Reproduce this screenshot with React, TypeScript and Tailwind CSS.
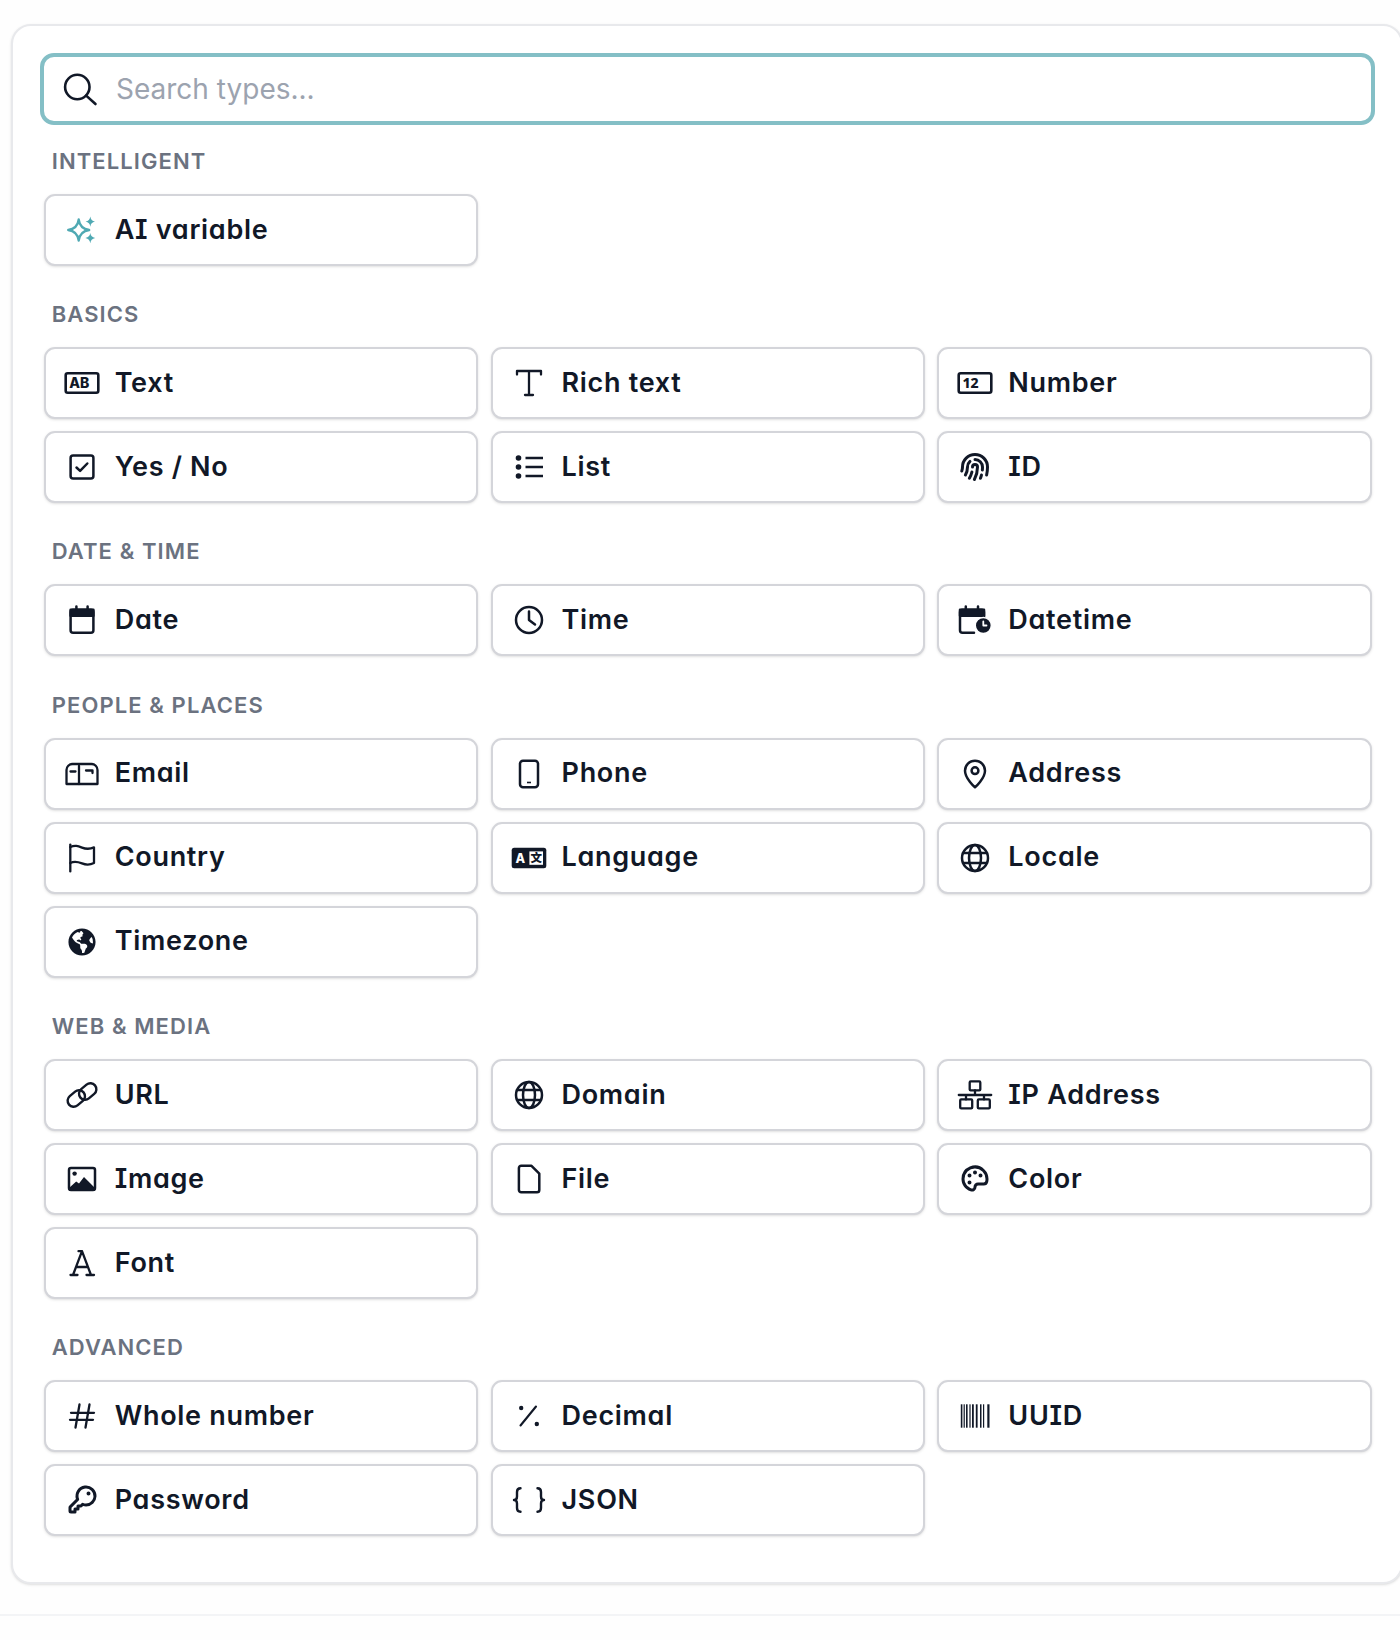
import React from "react";
import { PiFingerprintBold, PiPaletteBold, PiKeyBold } from "react-icons/pi";
import { FaGlobeAmericas } from "react-icons/fa";

const S = ({ children, c = "#111827", w = 2.5 }: { children: React.ReactNode; c?: string; w?: number }) => (
  <svg width="36" height="36" viewBox="0 0 36 36" fill="none" stroke={c} strokeWidth={w} strokeLinecap="round" strokeLinejoin="round">
    {children}
  </svg>
);
const D = "#111827";
const Globe = () => (
  <S>
    <circle cx="18" cy="18" r="13" />
    <ellipse cx="18" cy="18" rx="6" ry="13" />
    <path d="M6 13h24M6 23h24" />
  </S>
);
const Wrap = ({ children }: { children: React.ReactNode }) => (
  <span className="flex h-9 w-9 items-center justify-center text-[#111827]">{children}</span>
);

const icons: Record<string, React.ReactNode> = {
  ai: (
    <S c="#4fa9b3" w={2.3}>
      <path d="M14.7 7.5C15.5 14 18.5 17 25.2 18C18.5 19 15.5 22 14.7 28.5C13.9 22 10.9 19 4.2 18C10.9 17 13.9 14 14.7 7.5Z" />
      <path fill="#4fa9b3" stroke="none" d="M26.3 4.5C26.8 7.6 28.1 8.9 31 9.6C28.1 10.3 26.8 11.6 26.3 14.7C25.8 11.6 24.5 10.3 21.6 9.6C24.5 8.9 25.8 7.6 26.3 4.5Z" />
      <path fill="#4fa9b3" stroke="none" d="M26.3 21C26.8 24 28.1 25.3 31.2 26C28.1 26.7 26.8 28 26.3 31.2C25.8 28 24.5 26.7 21.4 26C24.5 25.3 25.8 24 26.3 21Z" />
    </S>
  ),
  text: (
    <S w={2.6}>
      <rect x="1.7" y="8.2" width="32.6" height="19.6" rx="2" />
      <text x="15.2" y="23" textAnchor="middle" fontSize="14" fontWeight="800" fill={D} stroke="none" fontFamily="Inter, sans-serif">AB</text>
    </S>
  ),
  rich: (
    <S w={2.3}>
      <path d="M6 9.5V6h24v3.5M18 6v24M14 30h8" />
    </S>
  ),
  number: (
    <S w={2.6}>
      <rect x="1.7" y="8.2" width="32.6" height="19.6" rx="2" />
      <text x="13.5" y="23" textAnchor="middle" fontSize="14" fontWeight="800" fill={D} stroke="none" fontFamily="'Noto Sans', sans-serif">12</text>
    </S>
  ),
  yes: (
    <S>
      <rect x="6.6" y="6.6" width="22.8" height="22.8" rx="2.5" />
      <path d="M12.5 18.5l3.6 3.4 7.2-7.4" />
    </S>
  ),
  list: (
    <S>
      <circle cx="7.5" cy="9" r="2.8" fill={D} stroke="none" />
      <circle cx="7.5" cy="18" r="2.8" fill={D} stroke="none" />
      <circle cx="7.5" cy="27" r="2.8" fill={D} stroke="none" />
      <path d="M14.5 9H32M14.5 18H32M14.5 27H32" strokeLinecap="butt" />
    </S>
  ),
  id: <Wrap><PiFingerprintBold size={32} /></Wrap>,
  date: (
    <S>
      <rect x="6.6" y="7.8" width="22.8" height="23" rx="2.5" />
      <rect x="6.6" y="7.8" width="22.8" height="6" fill={D} />
      <path d="M12.4 4.5v3M23.6 4.5v3" />
    </S>
  ),
  time: (
    <S>
      <circle cx="18" cy="18" r="13" />
      <path d="M18 9.5V18l6 4.5" />
    </S>
  ),
  datetime: (
    <S>
      <path d="M27 20V10.3a2.5 2.5 0 0 0-2.5-2.5h-19A2.5 2.5 0 0 0 3 10.3v18a2.5 2.5 0 0 0 2.5 2.5H17" />
      <rect x="3" y="7.8" width="24" height="6" fill={D} />
      <path d="M8.8 4.5v3M21 4.5v3" />
      <circle cx="26.3" cy="23.5" r="8" fill={D} stroke="#fff" strokeWidth="1.4" />
      <path d="M26.3 19.5v4h3.2" stroke="#fff" strokeWidth="1.8" />
    </S>
  ),
  email: (
    <S w={2.3}>
      <path d="M8.5 8H27.5A6 6 0 0 1 33.5 14V28H2.5V14A6 6 0 0 1 8.5 8Z" />
      <path d="M15 10V28M6.5 15.5h5M22 14.5h6.5v2.5" />
    </S>
  ),
  phone: (
    <S>
      <rect x="9" y="4.7" width="18" height="26.6" rx="3" />
      <path d="M16 26.5h4" strokeWidth="1.6" strokeLinecap="butt" />
    </S>
  ),
  address: (
    <S>
      <path d="M18 31.3C18 31.3 8 22.5 8 14.7A10 10 0 0 1 28 14.7C28 22.5 18 31.3 18 31.3Z" />
      <circle cx="18" cy="14.7" r="3.4" />
    </S>
  ),
  country: (
    <S w={2.3}>
      <path d="M6.3 4.6V31.4" />
      <path d="M6.3 7C11 4.8 14 6 18 7.6C22 9.2 26 9.2 30 7.4V23C26 25 22 25 18 23.4C14 21.8 10.5 20.8 6.3 23" />
    </S>
  ),
  language: (
    <svg width="36" height="36" viewBox="0 0 36 36">
      <rect x="0.7" y="7.8" width="34.6" height="20.4" rx="2.5" fill={D} />
      <rect x="18.4" y="11.4" width="13.6" height="13.4" fill="#fff" />
      <text x="9.4" y="22.6" textAnchor="middle" fontSize="12.5" fontWeight="800" fill="#fff" fontFamily="Inter, sans-serif">A</text>
      <text x="25.2" y="22.4" textAnchor="middle" fontSize="11.5" fontWeight="900" fill={D} fontFamily="'Noto Sans CJK SC', sans-serif">文</text>
    </svg>
  ),
  locale: <Globe />,
  timezone: <Wrap><FaGlobeAmericas size={28} /></Wrap>,
  url: (
    <S w={2.4}>
      <rect x="2.8" y="15.5" width="19" height="12" rx="6" transform="rotate(-40 12.3 21.5)" />
      <rect x="14.2" y="8.5" width="19" height="12" rx="6" transform="rotate(-40 23.7 14.5)" />
    </S>
  ),
  domain: <Globe />,
  ip: (
    <S w={2.3}>
      <rect x="12.7" y="4.4" width="10.6" height="9" rx="1" />
      <path d="M18 13.4V18M1.8 18h32.4M9 18v4.4M27 18v4.4" />
      <rect x="3.2" y="22.4" width="12" height="9" rx="1" />
      <rect x="20.8" y="22.4" width="12" height="9" rx="1" />
    </S>
  ),
  image: (
    <S>
      <rect x="5" y="7" width="26" height="22" rx="2" />
      <circle cx="10.6" cy="12.6" r="2.2" fill={D} stroke="none" />
      <path fill={D} stroke="none" d="M5 27l7.2-6.6 2.8 2.2 5-6.6 11 11V30H5z" />
    </S>
  ),
  file: (
    <S>
      <path d="M10.2 4.8H20.5L28.3 12.6V29A2.3 2.3 0 0 1 26 31.3H10.2A2.3 2.3 0 0 1 7.9 29V7.1A2.3 2.3 0 0 1 10.2 4.8Z" />
    </S>
  ),
  color: <Wrap><PiPaletteBold size={32} /></Wrap>,
  font: (
    <S w={2.3}>
      <path d="M6.5 30h7M22.5 30H30M9 30L18 6.2 27 30M12.2 22H23.8M14.5 6.2H18" />
    </S>
  ),
  whole: (
    <S w={2.3}>
      <path d="M15.5 6.5L11.5 29.5M25.5 6.5L21.5 29.5M7 14.8H30M6 21.8H29" />
    </S>
  ),
  decimal: (
    <S w={2.1}>
      <path d="M25 8.5L9.5 27.5" />
      <circle cx="10.2" cy="10" r="2.2" fill={D} stroke="none" />
      <circle cx="25.8" cy="26" r="2.2" fill={D} stroke="none" />
    </S>
  ),
  uuid: (
    <svg width="36" height="36" viewBox="0 0 36 36" fill={D}>
      <rect x="3.8" y="6.3" width="1.6" height="23.4" />
      <rect x="6.6" y="6.3" width="1.2" height="23.4" />
      <rect x="9" y="6.3" width="1.6" height="23.4" />
      <rect x="12.4" y="6.3" width="1.2" height="23.4" />
      <rect x="15" y="6.3" width="1.8" height="23.4" />
      <rect x="18.8" y="6.3" width="1.8" height="23.4" />
      <rect x="23" y="6.3" width="1.5" height="23.4" />
      <rect x="26" y="6.3" width="1.2" height="23.4" />
      <rect x="30.3" y="6.3" width="2.2" height="23.4" />
    </svg>
  ),
  password: <Wrap><PiKeyBold size={32} /></Wrap>,
  json: (
    <S w={2.4}>
      <path d="M9.5 6.3C6.5 6.3 6 8 6 10V14.5C6 16.5 5 18 3 18C5 18 6 19.5 6 21.5V26C6 28 6.5 29.7 9.5 29.7" />
      <path d="M26.5 6.3C29.5 6.3 30 8 30 10V14.5C30 16.5 31 18 33 18C31 18 30 19.5 30 21.5V26C30 28 29.5 29.7 26.5 29.7" />
    </S>
  ),
};

type Item = [string, string];
const sections: { title: string; items: Item[] }[] = [
  { title: "INTELLIGENT", items: [["ai", "AI variable"]] },
  { title: "BASICS", items: [["text", "Text"], ["rich", "Rich text"], ["number", "Number"], ["yes", "Yes / No"], ["list", "List"], ["id", "ID"]] },
  { title: "DATE & TIME", items: [["date", "Date"], ["time", "Time"], ["datetime", "Datetime"]] },
  { title: "PEOPLE & PLACES", items: [["email", "Email"], ["phone", "Phone"], ["address", "Address"], ["country", "Country"], ["language", "Language"], ["locale", "Locale"], ["timezone", "Timezone"]] },
  { title: "WEB & MEDIA", items: [["url", "URL"], ["domain", "Domain"], ["ip", "IP Address"], ["image", "Image"], ["file", "File"], ["color", "Color"], ["font", "Font"]] },
  { title: "ADVANCED", items: [["whole", "Whole number"], ["decimal", "Decimal"], ["uuid", "UUID"], ["password", "Password"], ["json", "JSON"]] },
];

export default function App() {
  return (
    <div className="h-[1640px] w-[1400px] overflow-hidden bg-[#fefefe] font-['Inter',sans-serif]">
      <div className="h-[1616px] border-b-2 border-[#f3f4f6] pl-[11px] pt-[24px]">
        <div className="h-[1560px] w-[1392px] rounded-[20px] border-2 border-[#e8e9ec] bg-white pl-[30.7px] pr-[29.3px] pt-[27px] shadow-sm">
          <div className="-ml-[3.7px] flex h-[72px] w-[1335px] items-center gap-[18px] rounded-[14px] border-4 border-[#84bfc6] bg-white pl-[18px]">
            <svg width="36" height="36" viewBox="0 0 36 36" fill="none" stroke="#111827" strokeWidth="2.6" strokeLinecap="round">
              <circle cx="15.3" cy="16" r="12.2" />
              <path d="M24.2 24.6L33.5 33" />
            </svg>
            <input
              placeholder="Search types..."
              className="flex-1 bg-transparent text-[28px] text-[#111827] outline-none placeholder:text-[#9ca3af]"
            />
          </div>
          {sections.map((s, i) => (
            <section key={s.title} className={i === 0 ? "mt-[22px]" : "mt-[34.2px]"}>
              <h3 className="mb-[19px] h-[28px] pl-[8px] text-[22px] font-semibold leading-[28px] tracking-[1.1px] text-[#6b7280]">
                {s.title}
              </h3>
              <div className="grid grid-cols-3 gap-x-[12.5px] gap-y-[12px]">
                {s.items.map(([k, label]) => (
                  <button
                    key={label}
                    className="flex h-[72px] items-center gap-[15px] rounded-[11px] border-2 border-[#d4d5da] bg-white pl-[18px] text-left shadow-sm"
                  >
                    <span className="flex h-9 w-9 shrink-0 items-center justify-center">{icons[k]}</span>
                    <span className="text-[27px] font-semibold tracking-[0.7px] text-[#111827] [font-feature-settings:'cv11','cv08']">{label}</span>
                  </button>
                ))}
              </div>
            </section>
          ))}
        </div>
      </div>
    </div>
  );
}
